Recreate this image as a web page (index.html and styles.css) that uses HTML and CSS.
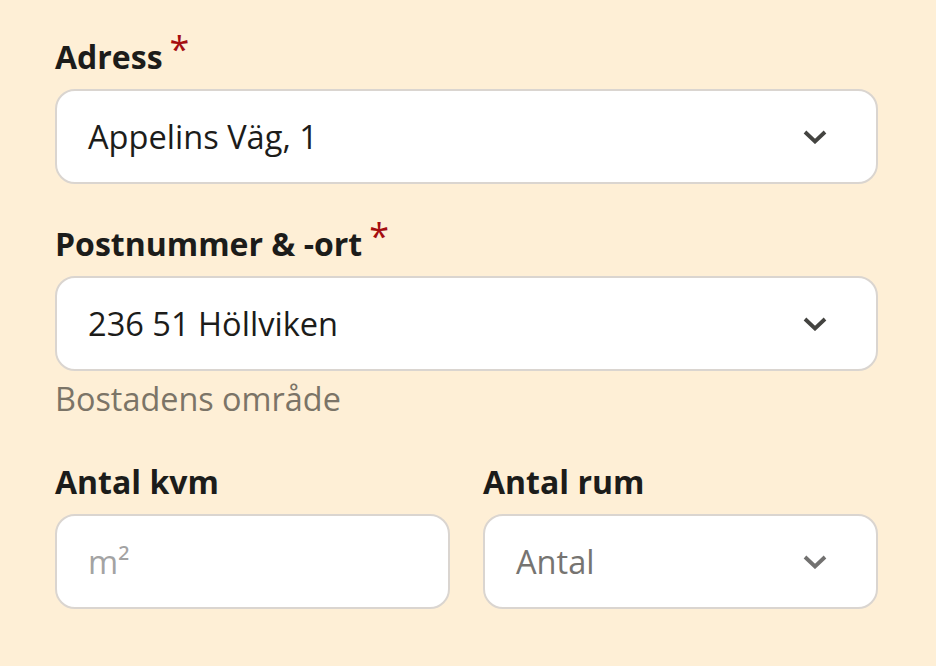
FILE: index.html
```html
<!DOCTYPE html>
<html lang="sv">
<head>
<meta charset="utf-8">
<link rel="stylesheet" href="styles.css">
</head>
<body>
<form class="form">
  <div class="field">
    <label class="label">Adress<span class="req">*</span></label>
    <div class="box select">
      <span class="value">Appelins Väg, 1</span>
      <svg class="chev" viewBox="0 0 24 14"><path d="M2 2 L12 11.5 L22 2"/></svg>
    </div>
  </div>
  <div class="field">
    <label class="label">Postnummer &amp; -ort<span class="req">*</span></label>
    <div class="box select">
      <span class="value">236 51 Höllviken</span>
      <svg class="chev" viewBox="0 0 24 14"><path d="M2 2 L12 11.5 L22 2"/></svg>
    </div>
    <div class="help">Bostadens område</div>
  </div>
  <div class="row">
    <div class="field">
      <label class="label">Antal kvm</label>
      <div class="box">
        <span class="value placeholder-light">m²</span>
      </div>
    </div>
    <div class="field">
      <label class="label">Antal rum</label>
      <div class="box select">
        <span class="value placeholder">Antal</span>
        <svg class="chev light" viewBox="0 0 24 14"><path d="M2 2 L12 11.5 L22 2"/></svg>
      </div>
    </div>
  </div>
</form>
</body>
</html>
```

FILE: styles.css
```css
html, body {
  margin: 0;
  padding: 0;
  background: #feefd6;
}
body {
  font-family: "Open Sans", "Noto Sans", sans-serif;
  color: #1c1c1a;
}
.form {
  padding: 37px 58px 0 55px;
  display: flex;
  flex-direction: column;
  gap: 40px;
}
.field {
  display: flex;
  flex-direction: column;
}
.label {
  font-size: 32px;
  font-weight: 700;
  line-height: 40px;
  margin-bottom: 12px;
  color: #1c1c1a;
}
.req {
  color: #a50d10;
  font-weight: 400;
  font-size: 36px;
  margin-left: 7px;
  vertical-align: 7px;
  line-height: 0;
}
.box {
  box-sizing: border-box;
  height: 95px;
  background: #fff;
  border: 2px solid #dad5d0;
  border-radius: 20px;
  display: flex;
  align-items: center;
  justify-content: space-between;
  padding: 0 49px 0 31px;
}
.value {
  font-size: 32.6px;
  line-height: 40px;
  color: #1c1c1a;
}
.placeholder {
  color: #767471;
}
.placeholder-light {
  color: #a3a3a3;
}
.chev {
  width: 24px;
  height: 14px;
  flex: none;
}
.chev path {
  fill: none;
  stroke: #444441;
  stroke-width: 3.8;
}
.chev.light path {
  stroke: #727170;
}
.help {
  font-size: 32.4px;
  line-height: 40px;
  color: #7b7467;
  margin-top: 7px;
  margin-bottom: 4px;
}
.row {
  display: grid;
  grid-template-columns: 1fr 1fr;
  column-gap: 33px;
}
```
